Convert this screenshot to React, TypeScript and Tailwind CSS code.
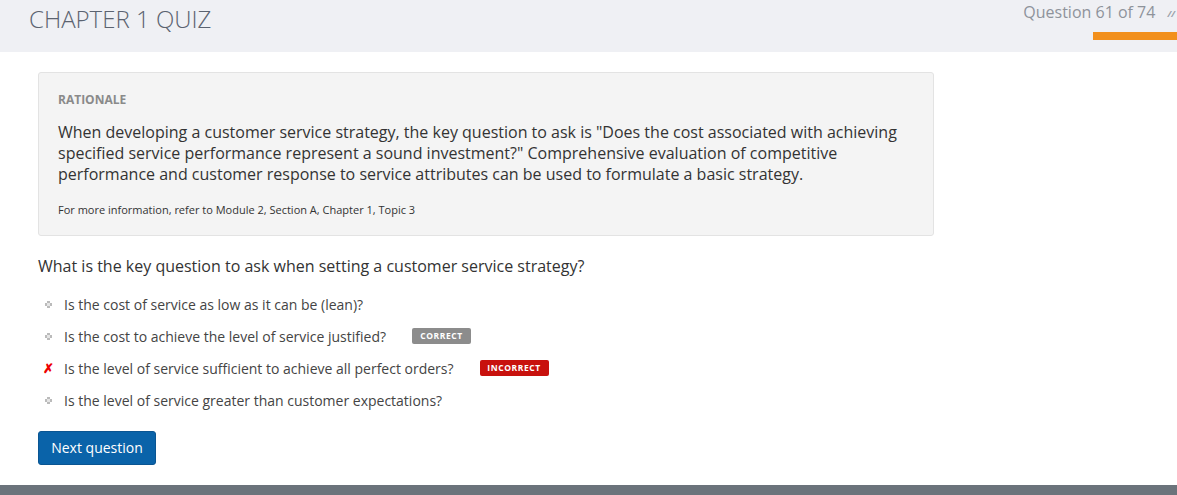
import React from "react";

const options = [
  { text: "Is the cost of service as low as it can be (lean)?", mark: "dot" },
  { text: "Is the cost to achieve the level of service justified?", mark: "dot", badge: "correct" },
  { text: "Is the level of service sufficient to achieve all perfect orders?", mark: "x", badge: "incorrect" },
  { text: "Is the level of service greater than customer expectations?", mark: "dot" },
];

function Dot() {
  return (
    <svg width="7" height="7" viewBox="0 0 7 7" className="block">
      <rect x="2" y="0" width="3" height="2" fill="#bbb" />
      <rect x="0" y="2" width="2" height="3" fill="#bbb" />
      <rect x="5" y="2" width="2" height="3" fill="#bbb" />
      <rect x="2" y="5" width="3" height="2" fill="#bbb" />
      <rect x="2" y="2" width="3" height="3" fill="#e5e5e5" />
    </svg>
  );
}

export default function App() {
  return (
    <div
      className="w-[1177px] h-[495px] bg-white flex flex-col overflow-hidden relative"
      style={{ fontFamily: '"Open Sans", "Noto Sans", sans-serif' }}
    >
      <header className="h-[52px] bg-[#eff0f4] flex justify-between shrink-0">
        <h1 className="pl-[29px] pt-[3px] text-[24px] font-light text-[#5b6370] leading-[32px]">
          CHAPTER 1 QUIZ
        </h1>
        <div className="flex flex-col items-end">
          <div className="flex items-start">
            <span className="text-[16px] text-[#8e939b] leading-[24px]">Question 61 of 74</span>
            <span className="ml-[12px] mr-[2px] text-[9px] italic font-bold text-[#9aa0a8] leading-[24px] pt-[2px]">
              //
            </span>
          </div>
          <div className="mt-[6px] w-[84px] h-[8px] bg-[#f2901d]" />
        </div>
      </header>

      <main className="pl-[38px] pt-[20px] flex-1">
        <section className="w-[896px] bg-[#f4f4f4] border border-[#e3e3e3] rounded-[3px] pl-[19px] pr-[20px] pt-[19px] pb-[17px]">
          <div className="text-[12px] font-bold text-[#8a8a8a] leading-[16px]">RATIONALE</div>
          <p className="mt-[14px] text-[16px] text-[#333] leading-[21px]">
            When developing a customer service strategy, the key question to ask is "Does the cost associated with achieving specified service performance represent a sound investment?" Comprehensive evaluation of competitive performance and customer response to service attributes can be used to formulate a basic strategy.
          </p>
          <p className="mt-[17px] text-[11px] text-[#333] leading-[16px]">
            For more information, refer to Module 2, Section A, Chapter 1, Topic 3
          </p>
        </section>

        <h2 className="mt-[18px] text-[16px] text-[#333] leading-[24px]">
          What is the key question to ask when setting a customer service strategy?
        </h2>

        <ul className="mt-[10px] flex flex-col">
          {options.map((o, i) => (
            <li key={i} className="h-[32px] flex items-center text-[14px] text-[#444]">
              <span className="w-[26px] flex justify-center pr-[6px]">
                {o.mark === "dot" ? (
                  <Dot />
                ) : (
                  <span className="text-[#e00] text-[13px] font-bold leading-none">✗</span>
                )}
              </span>
              <span>{o.text}</span>
              {o.badge === "correct" && (
                <span className="ml-[26px] inline-flex items-center justify-center w-[59px] h-[16px] rounded-[2px] bg-[#8c8c8c] text-white text-[8.5px] font-bold tracking-[0.6px]">
                  CORRECT
                </span>
              )}
              {o.badge === "incorrect" && (
                <span className="ml-[26px] inline-flex items-center justify-center w-[69px] h-[16px] rounded-[2px] bg-[#c8110d] text-white text-[8.5px] font-bold tracking-[0.6px]">
                  INCORRECT
                </span>
              )}
            </li>
          ))}
        </ul>

        <button className="mt-[15px] w-[118px] h-[34px] bg-[#0a63a9] border border-[#0a5592] rounded-[3px] text-white text-[14px] leading-none">
          Next question
        </button>
      </main>

      <footer className="h-[10px] bg-[#6b737b] shrink-0" />
    </div>
  );
}
